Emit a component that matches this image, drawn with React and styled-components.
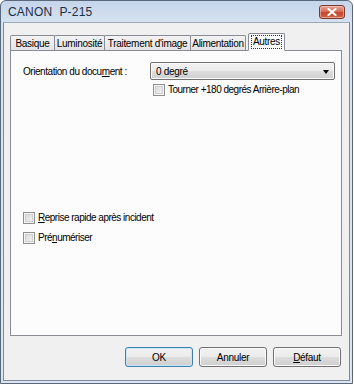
import React from "react";
import styled, { createGlobalStyle } from "styled-components";

const Global = createGlobalStyle`
  html, body { margin: 0; padding: 0; background: #fff; }
  body { font-family: "Liberation Sans", Arial, sans-serif; font-size: 10px; color: #000; }
  * { box-sizing: border-box; }
`;

const Window = styled.div`
  width: 353px;
  height: 384px;
  display: flex;
  flex-direction: column;
  border: 1px solid #59687a;
  border-radius: 6px 6px 0 0;
  background: linear-gradient(#c5d5ea, #d6e2f1 22px, #dbe5f2);
  padding: 0 2px 2px 2px;
  overflow: hidden;
`;

const TitleBar = styled.div`
  height: 21px;
  flex: none;
  display: flex;
  align-items: center;
  justify-content: space-between;
  padding: 0 5px 0 5px;
`;

const Title = styled.span`
  font-size: 12px;
  color: #1e2f45;
  white-space: pre;
  letter-spacing: 0.2px;
`;

const CloseButton = styled.div`
  width: 26px;
  height: 14px;
  margin-top: 1px;
  border-radius: 3px;
  border: 1px solid #7d3a2c;
  background: linear-gradient(#e8a493, #d4715b 45%, #c4452c 55%, #d2684a);
  display: flex;
  align-items: center;
  justify-content: center;
  box-shadow: inset 0 0 0 1px rgba(255, 220, 210, 0.5);
`;

const Client = styled.div`
  flex: 1;
  display: flex;
  flex-direction: column;
  background: #f0f0f0;
  border: 1px solid #7b8a9c;
  border-top-color: #9aa9bb;
  padding: 12px 7px 0 6px;
`;

const TabRow = styled.div`
  display: flex;
  align-items: flex-end;
  height: 15px;
  position: relative;
  z-index: 1;
`;

const Tab = styled.div`
  width: ${(p) => p.$w}px;
  height: ${(p) => (p.$active ? "18px" : "15px")};
  margin-left: ${(p) => (p.$active ? "2px" : p.$first ? "0" : "-1px")};
  border: 1px solid #898c95;
  border-bottom: ${(p) => (p.$active ? "1px solid #fcfcfc" : "none")};
  border-radius: 2px 2px 0 0;
  background: ${(p) => (p.$active ? "#fcfcfc" : "linear-gradient(#f3f3f3, #e4e4e4)")};
  display: flex;
  align-items: center;
  justify-content: center;
  padding-top: ${(p) => (p.$active ? "0" : "1px")};
  white-space: nowrap;
  letter-spacing: -0.3px;
  margin-bottom: ${(p) => (p.$active ? "-1px" : "0")};
`;

const Focus = styled.span`
  outline: 1px dotted #333;
  padding: 0 1px;
  line-height: 12px;
`;

const Panel = styled.div`
  height: 286px;
  background: #fcfcfc;
  border: 1px solid #898c95;
  display: flex;
  flex-direction: column;
  padding: 11px 6px 0 12px;
`;

const Row = styled.div`
  display: flex;
  align-items: center;
`;

const Label = styled.span`
  width: 127px;
  flex: none;
  letter-spacing: -0.45px;
`;

const Combo = styled.div`
  width: 186px;
  height: 18px;
  border: 1px solid #707070;
  border-radius: 2px;
  background: linear-gradient(#f2f2f2, #ebebeb 50%, #dddddd 51%, #cfcfcf);
  box-shadow: inset 0 0 0 1px #fafafa;
  display: flex;
  align-items: center;
  justify-content: space-between;
  padding: 0 5px 0 5px;
  letter-spacing: -0.3px;
`;

const Arrow = styled.span`
  width: 0;
  height: 0;
  border-left: 3.5px solid transparent;
  border-right: 3.5px solid transparent;
  border-top: 4px solid #000;
  margin-top: 1px;
`;

const CheckRow = styled.label`
  display: flex;
  align-items: center;
  gap: 3px;
  margin-left: ${(p) => p.$indent || 0}px;
  margin-top: ${(p) => p.$top || 0}px;
  letter-spacing: -0.5px;
  line-height: 12px;
`;

const Box = styled.span`
  width: 12px;
  height: 12px;
  flex: none;
  border: 1px solid #8e8f8f;
  background: linear-gradient(135deg, #d6d6d6, #f4f4f4);
  box-shadow: inset 0 0 0 1px #f4f4f4, inset 0 0 0 2px #cfcfcf;
`;

const Spacer = styled.div`
  flex: 1;
`;

const Footer = styled.div`
  flex: 1;
  display: flex;
  justify-content: flex-end;
  align-items: flex-start;
  gap: 6px;
  padding: 11px 1px 0 0;
`;

const Button = styled.div`
  width: 68px;
  height: 20px;
  border: 1px solid ${(p) => (p.$default ? "#3c7fb1" : "#707070")};
  border-radius: 3px;
  background: linear-gradient(#f2f2f2, #ebebeb 50%, #dddddd 51%, #cfcfcf);
  box-shadow: inset 0 0 0 1px ${(p) => (p.$default ? "#c8e6f7" : "#fbfbfb")};
  display: flex;
  align-items: center;
  justify-content: center;
  letter-spacing: -0.3px;
`;

const U = styled.span`
  text-decoration: underline;
`;

export default function App() {
  return (
    <>
      <Global />
      <Window>
        <TitleBar>
          <Title>{"CANON  P-215"}</Title>
          <CloseButton>
            <svg width="10" height="8" viewBox="0 0 10 8">
              <path d="M1.5 1 L8.5 7 M8.5 1 L1.5 7" stroke="#fff" strokeWidth="2" strokeLinecap="square" />
            </svg>
          </CloseButton>
        </TitleBar>
        <Client>
          <TabRow>
            <Tab $first $w={45}>Basique</Tab>
            <Tab $w={51}>Luminosité</Tab>
            <Tab $w={87}>Traitement d'image</Tab>
            <Tab $w={56}>Alimentation</Tab>
            <Tab $active $w={37}>
              <Focus>Autres</Focus>
            </Tab>
          </TabRow>
          <Panel>
            <Row>
              <Label>
                Orientation du docu<U>m</U>ent :
              </Label>
              <Combo>
                <span>0 degré</span>
                <Arrow />
              </Combo>
            </Row>
            <CheckRow $indent={130} $top={4}>
              <Box />
              Tourner +180 degrés Arrière-plan
            </CheckRow>
            <CheckRow $top={116}>
              <Box />
              <span>
                <U>R</U>eprise rapide après incident
              </span>
            </CheckRow>
            <CheckRow $top={8}>
              <Box />
              <span>
                Pré<U>n</U>umériser
              </span>
            </CheckRow>
            <Spacer />
          </Panel>
          <Footer>
            <Button $default>OK</Button>
            <Button>Annuler</Button>
            <Button>
              <span>
                <U>D</U>éfaut
              </span>
            </Button>
          </Footer>
        </Client>
      </Window>
    </>
  );
}
